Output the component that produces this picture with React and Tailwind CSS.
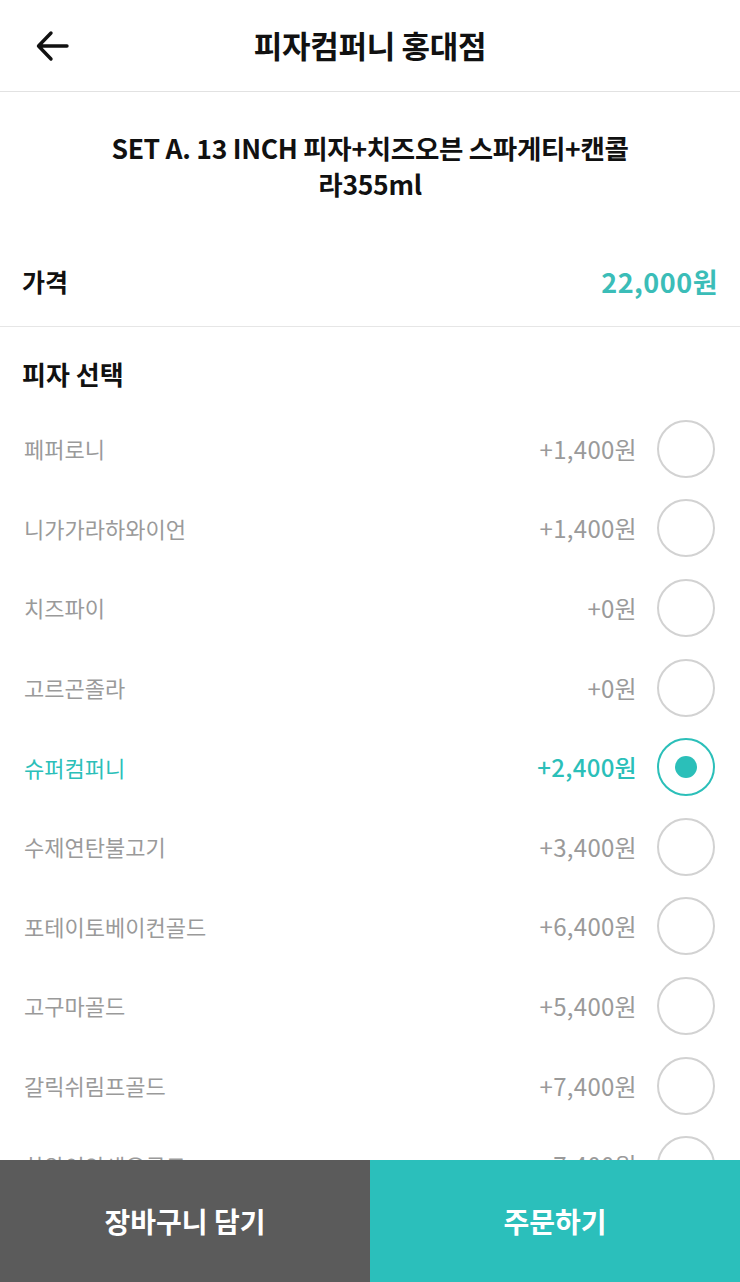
import React, { useState } from "react";

const options = [
	{ name: "페퍼로니", price: "+1,400원" },
	{ name: "니가가라하와이언", price: "+1,400원" },
	{ name: "치즈파이", price: "+0원" },
	{ name: "고르곤졸라", price: "+0원" },
	{ name: "슈퍼컴퍼니", price: "+2,400원" },
	{ name: "수제연탄불고기", price: "+3,400원" },
	{ name: "포테이토베이컨골드", price: "+6,400원" },
	{ name: "고구마골드", price: "+5,400원" },
	{ name: "갈릭쉬림프골드", price: "+7,400원" },
	{ name: "하와이안새우골드", price: "+7,400원" },
];

function Radio({ checked }) {
	return (
		<div
			className={
				checked
					? "w-[58px] h-[58px] rounded-full border-2 border-[#2bbfb9] flex items-center justify-center"
					: "w-[58px] h-[58px] rounded-full border-2 border-[#d2d2d2]"
			}
		>
			{checked && <div className="w-[22px] h-[22px] rounded-full bg-[#2bbfb9]" />}
		</div>
	);
}

export default function App() {
	const [selected, setSelected] = useState(4);

	return (
		<div
			className="w-[740px] min-h-[1282px] bg-white relative overflow-hidden"
			style={{ fontFamily: '"Noto Sans CJK KR", "Noto Sans", sans-serif' }}
		>
			{/* header */}
			<div className="h-[92px] border-b border-[#e2e2e2] flex items-center relative">
				<svg
					className="absolute left-[36px] top-[29px]"
					width="34"
					height="34"
					viewBox="0 0 34 34"
					fill="none"
					stroke="#111"
					strokeWidth="3.4"
					strokeLinecap="round"
					strokeLinejoin="round"
				>
					<path d="M31 17H3M15 4L2.5 17 15 30" />
				</svg>
				<p className="w-full text-center text-[31px] font-bold text-[#111] tracking-[-0.3px]">
					피자컴퍼니 홍대점
				</p>
			</div>

			{/* menu title */}
			<div className="pt-[38px] text-center text-[26.5px] font-bold leading-[36px] text-[#111] tracking-[-0.3px]">
				SET A. 13 INCH 피자+치즈오븐 스파게티+캔콜
				<br />
				라355ml
			</div>

			{/* price */}
			<div className="mt-[36px] h-[89px] border-b border-[#e6e6e6] flex items-center justify-between px-[22px]">
				<span className="text-[25px] font-bold text-[#111]">가격</span>
				<span className="text-[27px] font-bold text-[#3bbdb8] tracking-[0.5px]">22,000원</span>
			</div>

			{/* options */}
			<div className="pt-[27px] pb-[16px] px-[22px] h-[82px] flex items-center">
				<span className="text-[26px] font-bold text-[#111]">피자 선택</span>
			</div>
			<div className="pb-[140px]">
				{options.map((opt, i) => {
					const on = i === selected;
					return (
						<div
							key={i}
							onClick={() => setSelected(i)}
							className="h-[79.6px] flex items-center pl-[24px] pr-[25px]"
						>
							<span
								className={
									on
										? "flex-1 text-[22px] text-[#2bbfb9]"
										: "flex-1 text-[22px] text-[#9a9a9a]"
								}
							>
								{opt.name}
							</span>
							<span
								className={
									on
										? "text-[24px] font-medium text-[#2bbfb9] mr-[20px] tracking-[0.3px]"
										: "text-[24px] text-[#9a9a9a] mr-[20px] tracking-[0.3px]"
								}
							>
								{opt.price}
							</span>
							<Radio checked={on} />
						</div>
					);
				})}
			</div>

			{/* bottom buttons */}
			<div className="fixed left-0 top-[1160px] w-[740px] h-[122px] flex">
				<button className="w-[370px] h-full bg-[#5b5b5b] text-white text-[28px] font-bold">
					장바구니 담기
				</button>
				<button className="flex-1 h-full bg-[#2bbfbb] text-white text-[28px] font-bold">
					주문하기
				</button>
			</div>
		</div>
	);
}
